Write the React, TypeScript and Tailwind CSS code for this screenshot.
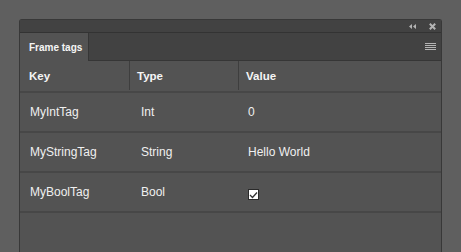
const rows = [
  { key: 'MyIntTag', type: 'Int', value: '0' },
  { key: 'MyStringTag', type: 'String', value: 'Hello World' },
  { key: 'MyBoolTag', type: 'Bool', value: null },
]

export default function App() {
  return (
    <div
      className="w-[461px] h-[252px] bg-[#5f5f5f] pt-[19px] pl-[19px] overflow-hidden"
      style={{ fontFamily: '"Liberation Sans", Arial, sans-serif' }}
    >
      <div className="w-[423px] h-[233px] flex flex-col bg-[#535353] border-x border-t border-[#383838] rounded-t-[3px]">
        {/* title bar */}
        <div className="h-[13px] bg-[#424242] border-b border-[#333333] flex items-center justify-end pr-[5px] gap-[12px]">
          <svg width="8" height="5" viewBox="0 0 8 5" className="mt-[1px]">
            <path d="M3 0 L0 2.5 L3 5 Z M7 0 L4 2.5 L7 5 Z" fill="#b4b4b4" />
          </svg>
          <svg width="7" height="7" viewBox="0 0 7 7">
            <path d="M0.8 0.8 L6.2 6.2 M6.2 0.8 L0.8 6.2" stroke="#b4b4b4" strokeWidth="2" />
          </svg>
        </div>

        {/* tab bar */}
        <div className="h-[28px] flex bg-[#424242]">
          <div className="w-[69px] bg-[#535353] border-r border-[#363636] flex items-center pl-[9px] text-[10px] font-bold text-[#f5f5f5]">
            Frame tags
          </div>
          <div className="flex-1 flex items-center justify-end pr-[5px] border-b border-[#363636]">
            <div className="flex flex-col gap-[1px]">
              <div className="w-[11px] h-px bg-[#b4b4b4]" />
              <div className="w-[11px] h-px bg-[#b4b4b4]" />
              <div className="w-[11px] h-px bg-[#b4b4b4]" />
              <div className="w-[11px] h-px bg-[#b4b4b4]" />
            </div>
          </div>
        </div>

        {/* header */}
        <div className="h-[32px] flex border-b-2 border-[#474747] text-[11.5px] font-bold text-[#f5f5f5]">
          <div className="w-[110px] border-r border-[#3e3e3e] flex items-center pl-[9px] pt-[2px] mb-[1px]">Key</div>
          <div className="w-[109px] border-r border-[#3e3e3e] flex items-center pl-[7px] pt-[2px] mb-[1px]">Type</div>
          <div className="flex-1 flex items-center pl-[7px] pt-[2px] mb-[1px]">Value</div>
        </div>

        {/* rows */}
        {rows.map((r) => (
          <div key={r.key} className="h-[40px] flex border-b-2 border-[#474747] text-[12px] text-[#f0f0f0]">
            <div className="w-[110px] flex items-center pl-[10px]">{r.key}</div>
            <div className="w-[109px] flex items-center pl-[11px]">{r.type}</div>
            <div className="flex-1 flex items-center pl-[9px]">
              {r.value !== null ? (
                r.value
              ) : (
                <div className="w-[11px] h-[11px] mt-[5px] bg-white border border-[#2a2a2a] flex items-center justify-center">
                  <svg width="9" height="8" viewBox="0 0 9 8">
                    <path d="M1 4 L3.5 6.5 L8 1.5" stroke="#333333" strokeWidth="1.3" fill="none" />
                  </svg>
                </div>
              )}
            </div>
          </div>
        ))}
      </div>
    </div>
  )
}
